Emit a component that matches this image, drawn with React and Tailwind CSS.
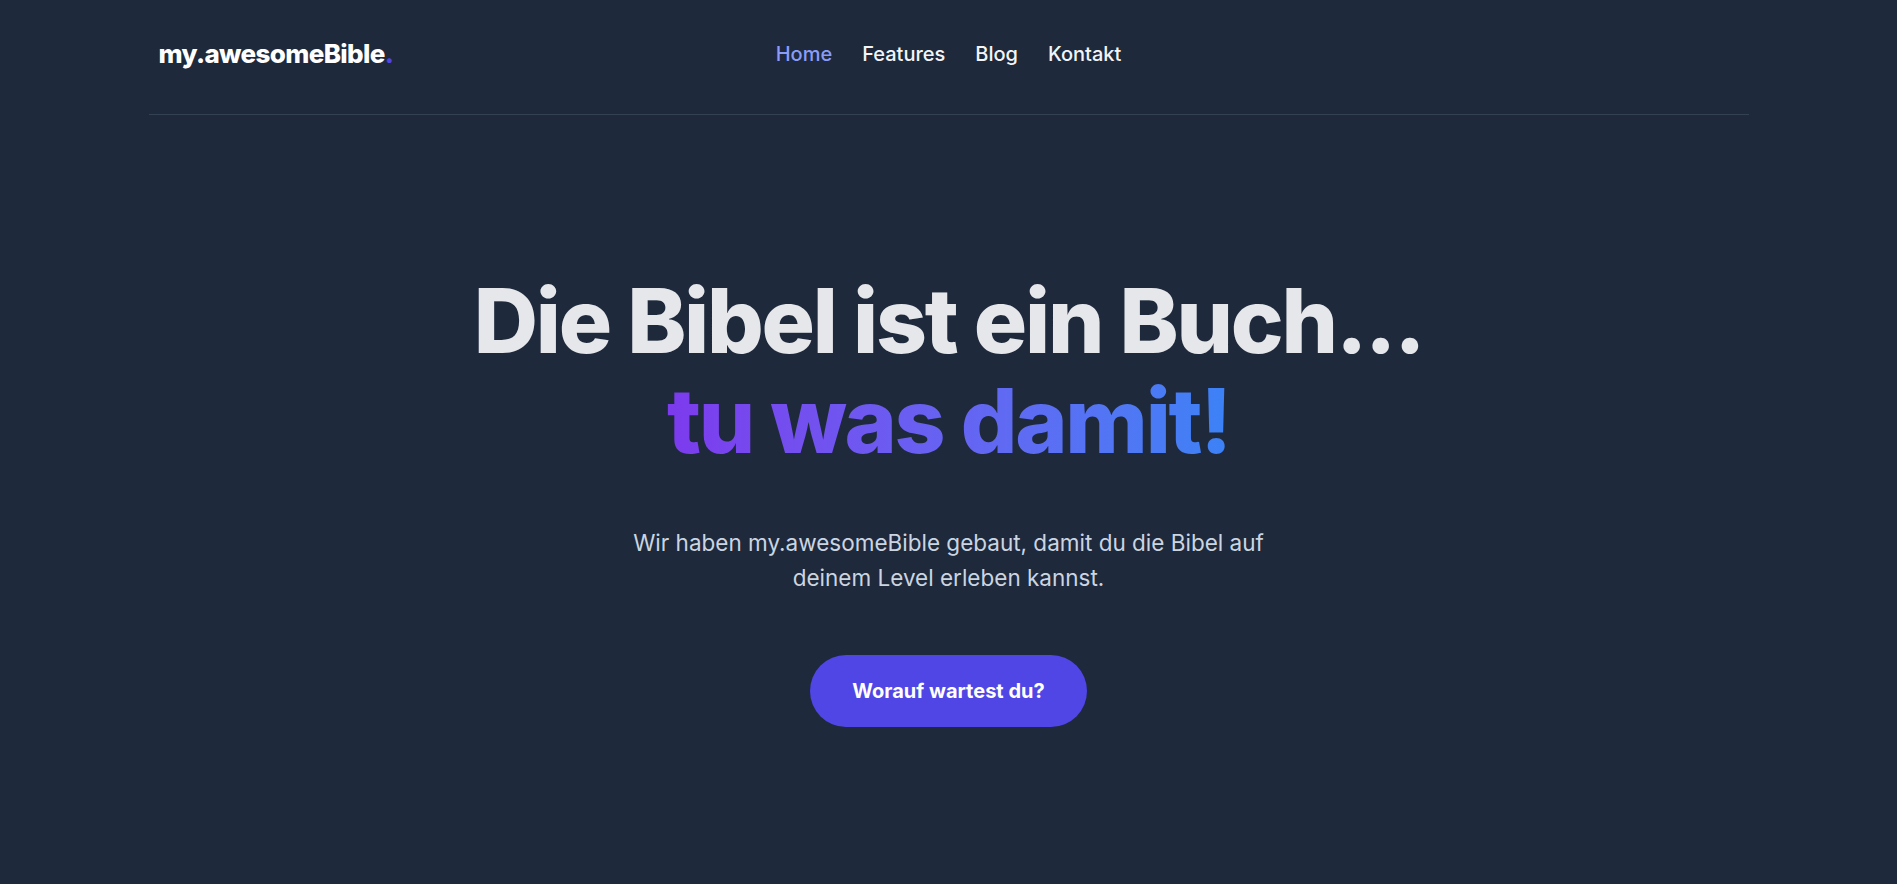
// App.jsx - Landingpage my.awesomeBible

const NAV_ITEMS = [
  { label: 'Home', active: true },
  { label: 'Features' },
  { label: 'Blog' },
  { label: 'Kontakt' },
]

function Header() {
  return (
    <header className="mx-auto max-w-[1600px] border-b border-[#334155]">
      <div className="grid grid-cols-[1fr_auto_1fr] items-center px-[10px] pt-[40px] pb-[46px]">
        {/* Logo */}
        <a href="#" className="justify-self-start text-[26px] leading-[28px] font-extrabold tracking-tight text-white">
          my.awesomeBible<span className="text-[#4f46e5]">.</span>
        </a>

        {/* Navigation */}
        <nav className="flex items-center gap-[30px] text-xl leading-7 font-medium">
          {NAV_ITEMS.map(({ label, active }) => (
            <a
              key={label}
              href="#"
              className={active ? 'text-[#8b9cf8]' : 'text-gray-100 hover:text-[#8b9cf8]'}
            >
              {label}
            </a>
          ))}
        </nav>

        <div />
      </div>
    </header>
  )
}

function Hero() {
  return (
    <section className="flex flex-col items-center px-6 pt-[156px] text-center">
      <h1 className="text-[89px] leading-[100px] font-extrabold tracking-tight text-[#e5e7eb]">
        Die Bibel ist ein Buch...
        <br />
        <span className="bg-gradient-to-r from-[#7c3aed] to-[#3b82f6] bg-clip-text text-transparent">
          tu was damit!
        </span>
      </h1>

      <p className="mt-[54px] max-w-2xl text-[22.5px] leading-[35px] text-[#cbd5e1]">
        Wir haben my.awesomeBible gebaut, damit du die Bibel auf deinem Level erleben kannst.
      </p>

      <a
        href="#"
        className="mt-[60px] rounded-full bg-[#4f46e5] px-[42px] py-[22px] text-xl leading-7 font-bold text-white hover:bg-[#4338ca]"
      >
        Worauf wartest du?
      </a>
    </section>
  )
}

export default function App() {
  return (
    <div className="min-h-screen bg-[#1e293b] font-['Inter',sans-serif] antialiased">
      <Header />
      <Hero />
    </div>
  )
}
